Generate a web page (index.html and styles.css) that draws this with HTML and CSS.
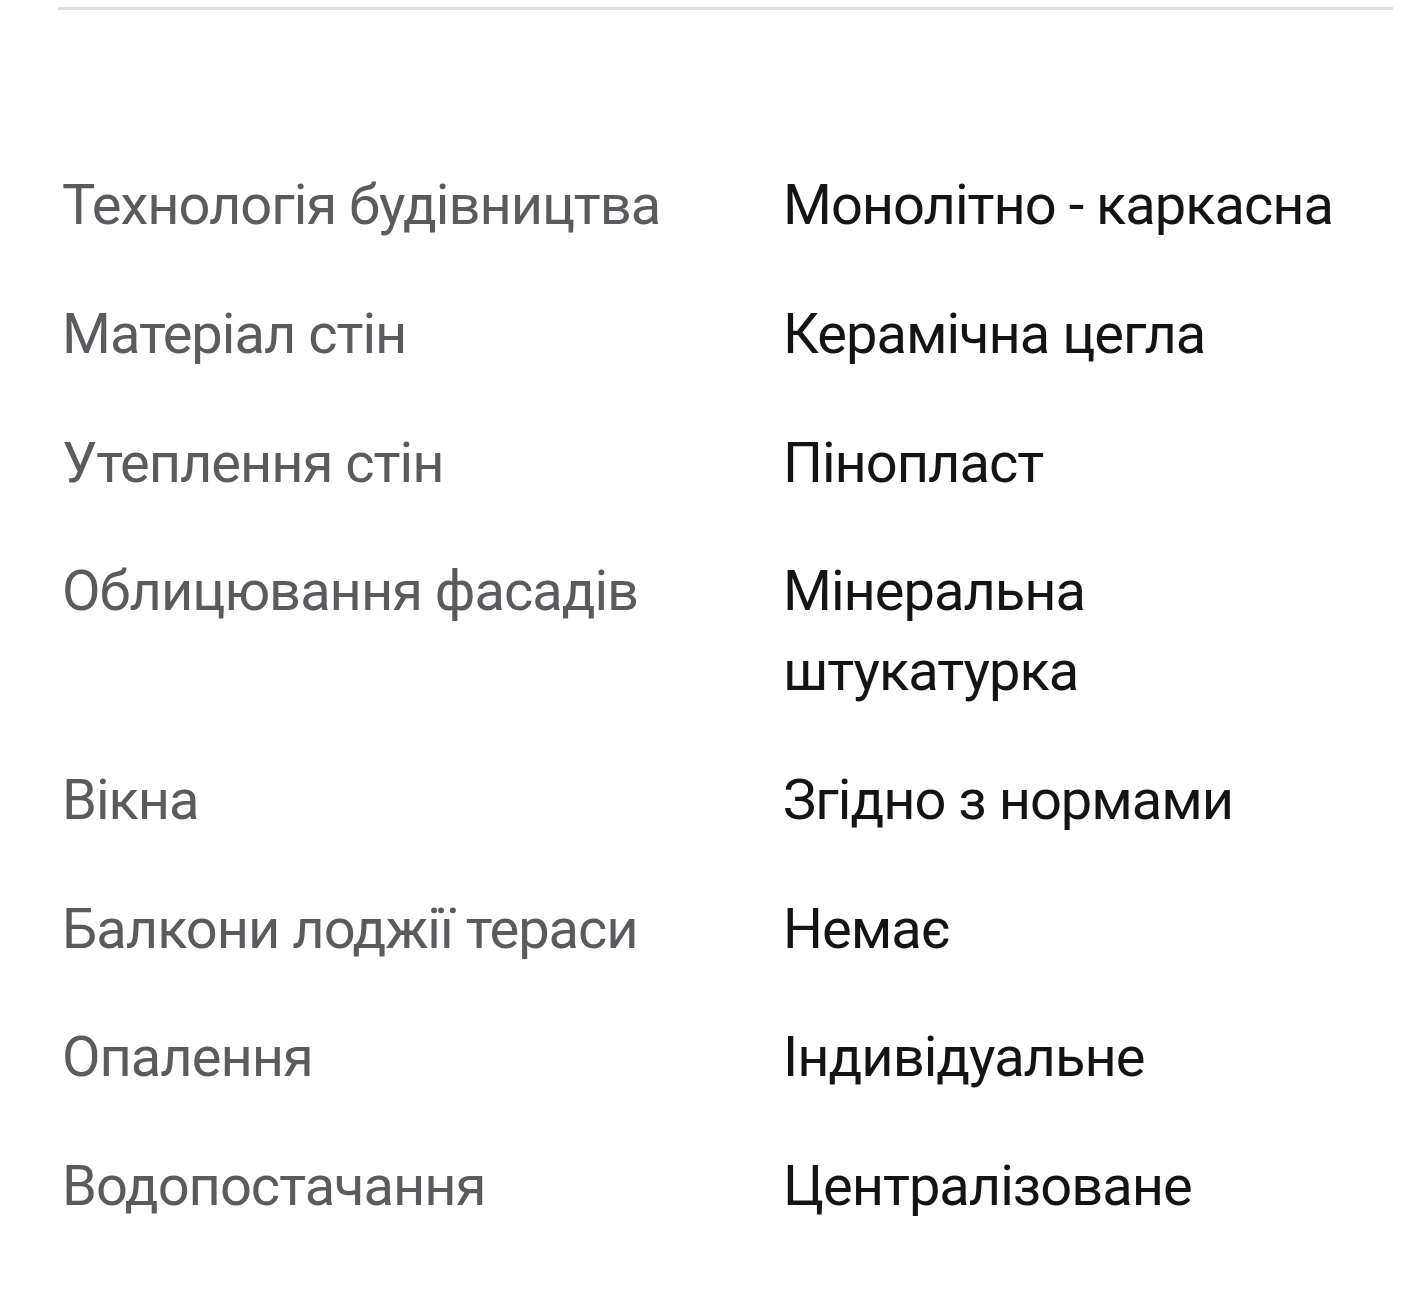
FILE: index.html
```html
<!DOCTYPE html>
<html lang="uk">
<head>
<meta charset="utf-8">
<link rel="stylesheet" href="styles.css">
</head>
<body>
<div class="page">
  <div class="divider"></div>
  <dl class="specs">
    <div class="row"><dt>Технологія будівництва</dt><dd>Монолітно - каркасна</dd></div>
    <div class="row"><dt>Матеріал стін</dt><dd>Керамічна цегла</dd></div>
    <div class="row"><dt>Утеплення стін</dt><dd>Пінопласт</dd></div>
    <div class="row"><dt>Облицювання фасадів</dt><dd>Мінеральна штукатурка</dd></div>
    <div class="row"><dt>Вікна</dt><dd>Згідно з нормами</dd></div>
    <div class="row"><dt>Балкони лоджії тераси</dt><dd>Немає</dd></div>
    <div class="row"><dt>Опалення</dt><dd>Індивідуальне</dd></div>
    <div class="row"><dt>Водопостачання</dt><dd>Централізоване</dd></div>
  </dl>
</div>
</body>
</html>
```

FILE: styles.css
```css
* { box-sizing: border-box; }
html, body { margin: 0; padding: 0; background: #fff; }
body { font-family: Roboto, "Noto Sans", sans-serif; }
.page {
  padding: 7px 16px 0 58px;
}
.divider {
  height: 3px;
  background: #dedede;
}
.specs {
  margin: 131px 0 0 0;
  padding: 0;
}
.row {
  display: grid;
  grid-template-columns: 725px 580px;
  padding: 24.35px 0;
  font-size: 56px;
  line-height: 80px;
  letter-spacing: -1px;
}
.row dt {
  margin: 0;
  padding-left: 4px;
  color: #5a5b5e;
}
.row dd {
  margin: 0;
  color: #141414;
}
```
